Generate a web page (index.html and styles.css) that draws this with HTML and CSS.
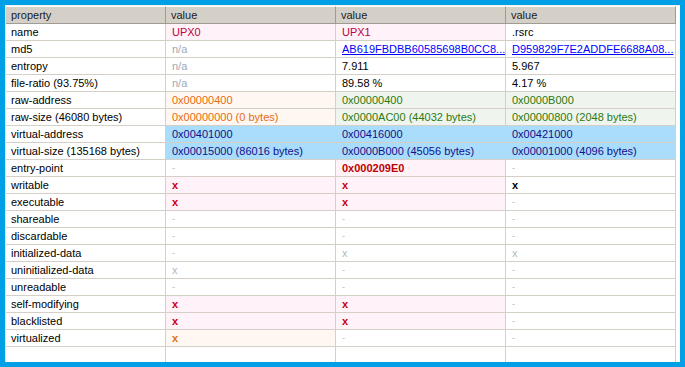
FILE: index.html
```html
<!DOCTYPE html>
<html lang="en">
<head>
    <meta charset="UTF-8">
    <title>Sections</title>
    <link rel="stylesheet" href="styles.css">
</head>
<body>
    <div class="frame">
        <div class="grid">
            <div class="hd">property</div><div class="hd">value</div><div class="hd">value</div><div class="hd">value</div>

            <div class="c">name</div><div class="c pink name">UPX0</div><div class="c pink name">UPX1</div><div class="c">.rsrc</div>
            <div class="c">md5</div><div class="c na">n/a</div><div class="c"><a href="#">AB619FBDBB60585698B0CC8...</a></div><div class="c"><a href="#">D959829F7E2ADDFE6688A08...</a></div>
            <div class="c">entropy</div><div class="c na">n/a</div><div class="c">7.911</div><div class="c">5.967</div>
            <div class="c">file-ratio (93.75%)</div><div class="c na">n/a</div><div class="c">89.58 %</div><div class="c">4.17 %</div>
            <div class="c">raw-address</div><div class="c orange">0x00000400</div><div class="c green">0x00000400</div><div class="c green">0x0000B000</div>
            <div class="c">raw-size (46080 bytes)</div><div class="c orange">0x00000000 (0 bytes)</div><div class="c green">0x0000AC00 (44032 bytes)</div><div class="c green">0x00000800 (2048 bytes)</div>
            <div class="c">virtual-address</div><div class="c sky">0x00401000</div><div class="c sky">0x00416000</div><div class="c sky">0x00421000</div>
            <div class="c">virtual-size (135168 bytes)</div><div class="c sky">0x00015000 (86016 bytes)</div><div class="c sky">0x0000B000 (45056 bytes)</div><div class="c sky">0x00001000 (4096 bytes)</div>
            <div class="c">entry-point</div><div class="c dash">-</div><div class="c pink ep">0x000209E0</div><div class="c dash">-</div>
            <div class="c">writable</div><div class="c pink flag">x</div><div class="c pink flag">x</div><div class="c flag black">x</div>
            <div class="c">executable</div><div class="c pink flag">x</div><div class="c pink flag">x</div><div class="c dash">-</div>
            <div class="c">shareable</div><div class="c dash">-</div><div class="c dash">-</div><div class="c dash">-</div>
            <div class="c">discardable</div><div class="c dash">-</div><div class="c dash">-</div><div class="c dash">-</div>
            <div class="c">initialized-data</div><div class="c dash">-</div><div class="c off">x</div><div class="c off">x</div>
            <div class="c">uninitialized-data</div><div class="c off">x</div><div class="c dash">-</div><div class="c dash">-</div>
            <div class="c">unreadable</div><div class="c dash">-</div><div class="c dash">-</div><div class="c dash">-</div>
            <div class="c">self-modifying</div><div class="c pink flag">x</div><div class="c pink flag">x</div><div class="c dash">-</div>
            <div class="c">blacklisted</div><div class="c pink flag">x</div><div class="c pink flag">x</div><div class="c dash">-</div>
            <div class="c">virtualized</div><div class="c orange flag">x</div><div class="c dash">-</div><div class="c dash">-</div>
            <div class="c"></div><div class="c"></div><div class="c"></div><div class="c"></div>
        </div>
    </div>
</body>
</html>
```

FILE: styles.css
```css
html, body {
    margin: 0;
    padding: 0;
    height: 367px;
    overflow: hidden;
}

body {
    background: #00a0e6;
    padding: 5px 5px 0 5px;
    box-sizing: border-box;
    font-family: "Liberation Sans", Arial, sans-serif;
    font-size: 11px;
    color: #000;
}

.frame {
    height: 357px;
    background: #fff;
    border-left: 1px solid #e4e4e4;
    border-top: 1px solid #f0f0f0;
    box-sizing: border-box;
    overflow: hidden;
}

.grid {
    display: grid;
    grid-template-columns: 160px 170px 170px 170px;
}

.hd, .c {
    box-sizing: border-box;
    border-right: 1px solid #d4d0c8;
    border-bottom: 1px solid #d4d0c8;
    white-space: nowrap;
    overflow: hidden;
}

.hd {
    height: 18px;
    line-height: 16px;
    padding-left: 5px;
    background: #d4d0c8;
    border-top: 1px solid #fff;
    border-right-color: #a09c94;
    border-bottom-color: #a09c94;
    color: #202020;
}

.c {
    height: 17px;
    line-height: 16px;
    padding-left: 6px;
}

.grid > .c:nth-child(4n+1) {
    padding-left: 5px;
}

.c a {
    color: #0000ff;
    text-decoration: underline;
}

.na { color: #a0a8b8; }
.dash { color: #b8b8b8; font-size: 9px; }
.off { color: #b4b8c0; }

.pink { background: #fff2f8; }
.name { color: #c00040; }
.ep { color: #c00000; font-weight: 700; }

.orange { background: #fff8f2; color: #e86a10; }
.green { background: #f0f4ee; color: #2a7a10; }
.sky { background: #aadcfc; color: #10108a; }

.flag { font-weight: 700; color: #c80010; }
.orange.flag { color: #e07010; }
.flag.black { color: #000; }
```
